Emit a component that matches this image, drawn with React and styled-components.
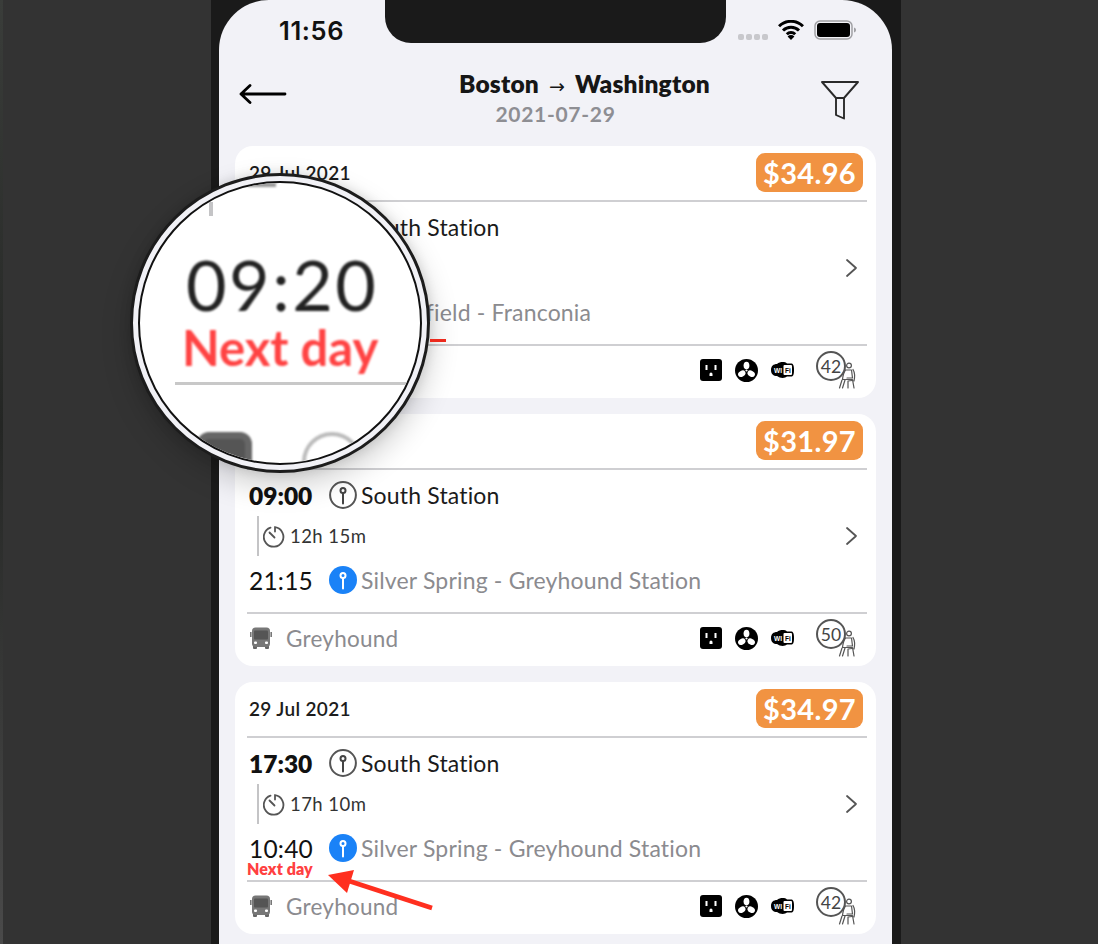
import React from "react";
import styled, { createGlobalStyle } from "styled-components";

const Global = createGlobalStyle`
  html, body { margin: 0; padding: 0; background: #333333; }
  * { box-sizing: border-box; }
`;
const FONT = `"Lato", "Noto Sans", sans-serif`;

const Page = styled.div`
  position: relative; width: 1098px; height: 944px; overflow: hidden;
  background: #333333; font-family: ${FONT}; padding-left: 211px;
`;
const EdgeStrip = styled.div`
  position: absolute; left: 0; top: 0; width: 3px; height: 944px;
  background: linear-gradient(#3a3d3a, #242624 45%, #4a4a4a);
`;
const Frame = styled.div`
  width: 690px; height: 944px; background: #1a1a1a; padding-left: 8px;
`;
const Screen = styled.div`
  width: 673px; height: 944px; background: #f2f2f7; border-radius: 50px 50px 0 0;
  overflow: hidden; padding: 0 16px;
`;
const StatusBar = styled.div`
  height: 62px; display: grid; grid-template-columns: 150px 341px 1fr; margin: 0 -16px;
`;
const Clock = styled.div`
  font-family: "Inter", sans-serif; font-weight: 600; font-size: 25.5px; line-height: 26px;
  color: #111; padding: 18px 0 0 60px; letter-spacing: 0.6px;
`;
const Notch = styled.div`
  width: 341px; height: 43px; margin-left: 16px; background: #1a1a1a; border-radius: 0 0 26px 26px;
`;
const StatusIcons = styled.div`
  display: flex; align-items: flex-start; padding: 20px 0 0 28px; gap: 10px;
`;
const Dots = styled.div`
  display: flex; gap: 2.5px; margin-top: 14px;
`;
const Dot = styled.span`
  width: 5.5px; height: 5.5px; border-radius: 2px; background: #c8c8cc;
`;
const NavBar = styled.div`
  height: 84px; display: grid; grid-template-columns: 70px 1fr 70px; align-items: start;
`;
const TitleBlock = styled.div`
  text-align: center; padding-top: 7px;
`;
const Title = styled.div`
  font-size: 24.5px; font-weight: 800; color: #161616; line-height: 30px; padding-left: 58px;
  white-space: nowrap; letter-spacing: 0.2px;
`;
const TitleArrow = styled.span`
  font-family: "DejaVu Sans", sans-serif; font-weight: 400; font-size: 19px; line-height: 1; margin: 0 4px;
`;
const Subtitle = styled.div`
  font-size: 21px; font-weight: 700; color: #8e8e93; line-height: 28px; margin-top: 1px; letter-spacing: 0.7px;
`;
const List = styled.div`
  display: flex; flex-direction: column; gap: 16px; width: 641px;
`;
const Card = styled.div`
  height: 252px; background: #fff; border-radius: 18px; padding: 0 9px 0 12px;
`;
const CardHead = styled.div`
  height: 56px; border-bottom: 2px solid #cfcfd2; display: flex; align-items: center; justify-content: space-between;
  padding: 0 4px 2px 2px;
`;
const DateText = styled.div`
  font-size: 19px; font-weight: 600; color: #1c1c1c; letter-spacing: 0.35px;
`;
const Price = styled.div`
  width: 107px; height: 39px; border-radius: 9px; background: #f19342; color: #fff;
  font-size: 29px; font-weight: 700; display: flex; align-items: center; justify-content: center; letter-spacing: 0.3px;
`;
const Body = styled.div`
  position: relative; height: 142px; padding: 5px 0 0 2px;
`;
const StopRow = styled.div`
  height: 40px; display: flex; align-items: center;
`;
const Time = styled.div`
  width: 80px; font-size: 24.5px; font-weight: ${p => (p.$bold ? 800 : 400)}; color: #111; letter-spacing: ${p => (p.$bold ? "0" : "0.2px")};
`;
const StopName = styled.div`
  margin-left: 4px; font-size: 23px; color: ${p => (p.$muted ? "#8b8b8f" : "#1b1b1b")}; white-space: nowrap; letter-spacing: 0.17px;
`;
const DurationRow = styled.div`
  height: 40px; display: flex; align-items: center; margin: 1px 0 0 8px; gap: 6px; position: relative;
`;
const Rail = styled.div`
  width: 2px; height: 40px; background: #c4c4c6; margin-right: -2px;
`;
const DurationText = styled.div`
  font-size: 18.5px; color: #333; letter-spacing: 0.45px; margin-left: -1px;
`;
const Chevron = styled.div`
  position: absolute; right: 7px; top: 50%; transform: translateY(-50%); width: 16px; height: 20px; display: flex;
`;
const ArriveGap = styled.div` height: 4px; `;
const NextDay = styled.div`
  font-size: 16px; font-weight: 800; color: #ff4040; line-height: 14px; margin: -6px 0 0 -2px; letter-spacing: 0.1px;
`;
const CardFoot = styled.div`
  height: 54px; border-top: 2px solid #cfcfd2; display: flex; align-items: center; padding: 0 3px 4px 3px;
`;
const Operator = styled.div`
  margin-left: 14px; font-size: 22.5px; color: #8b8b8f; flex: 1; letter-spacing: 0.25px;
`;
const Amenities = styled.div`
  display: flex; align-items: center; gap: 13px; margin-right: 22px;
`;
const Seats = styled.div`
  position: relative; width: 42px; height: 38px; margin-right: 6px;
`;
const SeatCount = styled.div`
  width: 30px; height: 30px; border: 2px solid #555; border-radius: 50%; background: #fff;
  font-size: 17.5px; color: #444; display: flex; align-items: center; justify-content: center;
`;
const SeatPerson = styled.div`
  position: absolute; left: 22px; top: 11px; display: flex;
`;
const Lens = styled.div`
  position: absolute; left: 130px; top: 173px; width: 300px; height: 300px; border-radius: 50%;
  background: #f1f1f6; border: 3px solid #1c1c1c; padding: 5px;
  box-shadow: 0 12px 30px rgba(0,0,0,0.2), 0 0 12px rgba(0,0,0,0.12);
`;
const LensGlass = styled.div`
  position: relative; width: 100%; height: 100%; border-radius: 50%; background: #fff; border: 2px solid #111; overflow: hidden;
  padding: 65px 0 0 35px;
`;
const LensBig = styled.div`
  font-size: 70px; line-height: 72px; color: #222; letter-spacing: 2.5px; filter: blur(1px); font-weight: 400; margin-left: 11px;
`;
const LensNext = styled.div`
  font-size: 49px; line-height: 50px; font-weight: 700; color: #ff4343; filter: blur(0.9px); margin-left: 7px; margin-top: 2px; white-space: nowrap;
`;
const LensRule = styled.div`
  height: 3px; background: #c8c8c8; margin-top: 10px; width: 260px; filter: blur(0.5px);
`;
const LensBottom = styled.div`
  display: flex; gap: 50px; margin: 47px 0 0 22px; filter: blur(0.8px);
`;
const LensBus = styled.div`
  width: 55px; height: 60px; border: 7px solid #666; border-radius: 12px 12px 0 0; background: #555;
`;
const LensArc = styled.div`
  width: 60px; height: 60px; border: 4px solid #bbb; border-radius: 50%;
`;
const LensTick = styled.div`
  position: absolute; left: 69px; top: 19px; width: 4px; height: 14px; background: #c4c4c6; filter: blur(0.5px);
`;
const LensSmudge = styled.div`
  position: absolute; left: 108px; top: 0; width: 28px; height: 4px; background: #999; filter: blur(1px);
`;
const Tick = styled.div`
  position: absolute; left: 430px; top: 339px; width: 16px; height: 3px; background: #ec2a1d;
`;
const ArrowSvg = styled.svg`
  position: absolute; left: 320px; top: 865px;
`;
const BadgeLabel = styled.text`
  font-family: "Liberation Sans", sans-serif; font-weight: 700; font-size: 6.5px;
`;

const Back = () => (
  <svg width="48" height="22" viewBox="0 0 48 22" style={{ marginLeft: 4, marginTop: 21 }}>
    <path d="M2 11H46M11 2.500L2 11L11 19.500" fill="none" stroke="#000" strokeWidth="2.800" strokeLinecap="round" strokeLinejoin="round" />
  </svg>
);
const Funnel = () => (
  <svg width="40" height="40" viewBox="0 0 40 40" style={{ marginLeft: 14, marginTop: 18 }}>
    <path d="M2 2H38L24 18H16ZM16 18V35L24 38.500V18" fill="none" stroke="#2a2a2a" strokeWidth="1.900" strokeLinejoin="round" />
  </svg>
);
const Wifi = () => (
  <svg width="26" height="20" viewBox="0 0 26 20">
    <path d="M1 6.300a17 17 0 0 1 24 0M5 10.500a11.400 11.400 0 0 1 16 0M8.800 14.300a6 6 0 0 1 8.400 0" fill="none" stroke="#000" strokeWidth="3" />
    <path d="M13 20l-3.400-3.500a4.700 4.700 0 0 1 6.800 0z" fill="#000" />
  </svg>
);
const Battery = () => (
  <svg width="43" height="20" viewBox="0 0 43 20">
    <rect x="1" y="1" width="37" height="18" rx="5" fill="none" stroke="#a0a0a4" strokeWidth="1.500" />
    <rect x="3" y="3" width="33" height="14" rx="3" fill="#000" />
    <path d="M40 7.500c1.500.5 2 1.500 2 2.500s-.5 2-2 2.500z" fill="#a0a0a4" />
  </svg>
);
const Pin = ({ filled }) => (
  <svg width="28" height="28" viewBox="0 0 28 28" style={{ flex: "none" }}>
    <circle cx="14" cy="14" r={filled ? 14 : 12.900} fill={filled ? "#1a82f7" : "none"} stroke={filled ? "none" : "#555"} strokeWidth="2" />
    <circle cx="14" cy="9.500" r="2.500" fill="none" stroke={filled ? "#fff" : "#444"} strokeWidth="2" />
    <path d="M14 12V22.500" stroke={filled ? "#fff" : "#444"} strokeWidth="2" strokeLinecap="round" />
  </svg>
);
const Timer = () => (
  <svg width="22" height="24" viewBox="0 0 22 24" style={{ flex: "none" }}>
    <path d="M7.500 3.600A9.800 9.800 0 1 0 12 3.200V7.500" fill="none" stroke="#555" strokeWidth="1.800" strokeLinecap="round" />
    <path d="M6.500 8.500L11.500 13.500" stroke="#555" strokeWidth="1.800" strokeLinecap="round" />
  </svg>
);
const Right = () => (
  <svg width="16" height="20" viewBox="0 0 16 20">
    <path d="M3 2L12 10L3 18" fill="none" stroke="#555" strokeWidth="1.800" strokeLinecap="round" strokeLinejoin="round" />
  </svg>
);
const Bus = () => (
  <svg width="22" height="22" viewBox="0 0 22 22" style={{ flex: "none" }}>
    <rect x="3" y="18" width="4" height="4" rx="1" fill="#666" />
    <rect x="15" y="18" width="4" height="4" rx="1" fill="#666" />
    <rect x="2" y="0.500" width="18" height="19.500" rx="3.500" fill="#777" />
    <rect x="4" y="3.500" width="14" height="9" rx="1" fill="#555" />
    <rect x="0" y="5" width="1.600" height="5" fill="#777" />
    <rect x="20.400" y="5" width="1.600" height="5" fill="#777" />
    <rect x="4" y="14.500" width="3" height="2.500" rx="1" fill="#fff" />
    <rect x="15" y="14.500" width="3" height="2.500" rx="1" fill="#fff" />
  </svg>
);
const Outlet = () => (
  <svg width="22" height="22" viewBox="0 0 22 22" style={{ flex: "none" }}>
    <rect width="22" height="22" rx="3" fill="#000" />
    <rect x="5.500" y="6" width="2" height="5" fill="#fff" />
    <rect x="14.500" y="6" width="2" height="5" fill="#fff" />
    <path d="M9.500 17v-2a1.500 1.500 0 0 1 3 0v2z" fill="#fff" />
  </svg>
);
const Fan = () => (
  <svg width="23" height="23" viewBox="0 0 23 23" style={{ flex: "none" }}>
    <circle cx="11.500" cy="11.500" r="11.500" fill="#000" />
    <ellipse cx="11.500" cy="6.500" rx="2.900" ry="3.800" fill="#fff" />
    <ellipse cx="6.800" cy="14.700" rx="3.900" ry="2.900" fill="#fff" transform="rotate(-30 6.800 14.700)" />
    <ellipse cx="16.200" cy="14.700" rx="3.900" ry="2.900" fill="#fff" transform="rotate(30 16.200 14.700)" />
    <circle cx="11.500" cy="11.500" r="1.100" fill="#fff" />
  </svg>
);
const WifiBadge = () => (
  <svg width="23" height="16" viewBox="0 0 23 16" style={{ flex: "none" }}>
    <path d="M6 2C9 -0.500 14 -0.500 16 1.500H20C22 1.500 23 3 23 8C23 13 22 14.500 20 14.500H16C14 16.500 9 16.500 6 14C2.500 14 0 12 0 8C0 4 2.500 2 6 2Z" fill="#000" />
    <rect x="12.500" y="3" width="8.500" height="10" rx="1" fill="#fff" />
    <BadgeLabel x="3" y="10.500" fill="#fff">WI</BadgeLabel>
    <BadgeLabel x="14" y="10.500" fill="#000">Fi</BadgeLabel>
  </svg>
);
const Sitter = () => (
  <svg width="20" height="27" viewBox="0 0 20 27">
    <circle cx="11" cy="3.500" r="2.400" fill="none" stroke="#555" strokeWidth="1.200" />
    <path d="M15 7.500c1.800 3 2 7 1 11.500M7.500 8h6l1 8H9M7.500 8C5.800 10 5 13 4.500 17.500H14.500L16 26M4 18L1.500 26M7 18L4.500 26M14 18.500L10 19V26" fill="none" stroke="#555" strokeWidth="1.200" strokeLinecap="round" strokeLinejoin="round" />
  </svg>
);

const trips = [
  { price: "$34.96", dep: "21:00", dur: "12h 20m", arr: "09:20", to: "Springfield - Franconia", next: true, seats: 42 },
  { price: "$31.97", dep: "09:00", dur: "12h 15m", arr: "21:15", to: "Silver Spring - Greyhound Station", next: false, seats: 50 },
  { price: "$34.97", dep: "17:30", dur: "17h 10m", arr: "10:40", to: "Silver Spring - Greyhound Station", next: true, seats: 42 },
];

const TripCard = ({ t }) => (
  <Card>
    <CardHead>
      <DateText>29 Jul 2021</DateText>
      <Price>{t.price}</Price>
    </CardHead>
    <Body>
      <StopRow>
        <Time $bold>{t.dep}</Time>
        <Pin />
        <StopName>South Station</StopName>
      </StopRow>
      <DurationRow>
        <Rail />
        <Timer />
        <DurationText>{t.dur}</DurationText>
        <Chevron><Right /></Chevron>
      </DurationRow>
      <ArriveGap />
      <StopRow>
        <Time>{t.arr}</Time>
        <Pin filled />
        <StopName $muted>{t.to}</StopName>
      </StopRow>
      {t.next && <NextDay>Next day</NextDay>}
    </Body>
    <CardFoot>
      <Bus />
      <Operator>Greyhound</Operator>
      <Amenities>
        <Outlet />
        <Fan />
        <WifiBadge />
      </Amenities>
      <Seats>
        <SeatCount>{t.seats}</SeatCount>
        <SeatPerson><Sitter /></SeatPerson>
      </Seats>
    </CardFoot>
  </Card>
);

export default function App() {
  return (
    <Page>
      <Global />
      <EdgeStrip />
      <Frame>
        <Screen>
          <StatusBar>
            <Clock>11:56</Clock>
            <Notch />
            <StatusIcons>
              <Dots><Dot /><Dot /><Dot /><Dot /></Dots>
              <Wifi />
              <Battery />
            </StatusIcons>
          </StatusBar>
          <NavBar>
            <Back />
            <TitleBlock>
              <Title>Boston <TitleArrow>→</TitleArrow> Washington</Title>
              <Subtitle>2021-07-29</Subtitle>
            </TitleBlock>
            <Funnel />
          </NavBar>
          <List>
            {trips.map(t => <TripCard key={t.price} t={t} />)}
          </List>
        </Screen>
      </Frame>
      <Lens>
        <LensGlass>
          <LensSmudge />
          <LensTick />
          <LensBig>09:20</LensBig>
          <LensNext>Next day</LensNext>
          <LensRule />
          <LensBottom>
            <LensBus />
            <LensArc />
          </LensBottom>
        </LensGlass>
      </Lens>
      <Tick />
      <ArrowSvg width="120" height="50" viewBox="0 0 120 50">
        <path d="M8 10L34 5L27 28Z" fill="#ff2f1f" />
        <path d="M26 15L112 43" stroke="#ff2f1f" strokeWidth="4.500" />
      </ArrowSvg>
    </Page>
  );
}
